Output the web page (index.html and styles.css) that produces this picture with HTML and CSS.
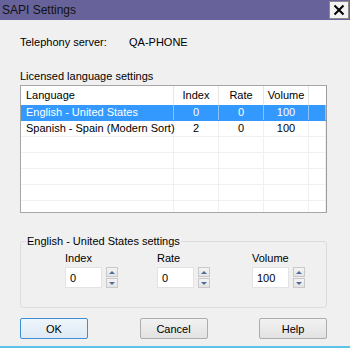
FILE: index.html
```html
<!DOCTYPE html>
<html lang="en">

<head>
    <meta charset="UTF-8">
    <meta name="viewport" content="width=device-width, initial-scale=1.0">
    <title>SAPI Settings</title>
    <link rel="stylesheet" href="styles.css">
</head>

<body>
    <div class="window">
        <div class="titlebar">
            <span class="title">SAPI Settings</span>
            <button class="close" title="Close">
                <svg width="12" height="12" viewBox="0 0 12 12">
                    <path d="M1.5 1.5 L10.5 10.5 M10.5 1.5 L1.5 10.5" stroke="#000" stroke-width="2" />
                </svg>
            </button>
        </div>

        <div class="content">
            <div class="server">
                <span class="server-label">Telephony server:</span>
                <span>QA-PHONE</span>
            </div>

            <div class="list-label">Licensed language settings</div>

            <div class="list">
                <div class="row header">
                    <div class="cell lang">Language</div>
                    <div class="cell">Index</div>
                    <div class="cell">Rate</div>
                    <div class="cell">Volume</div>
                    <div class="cell"></div>
                </div>
                <div class="row selected">
                    <div class="cell lang">English - United States</div>
                    <div class="cell">0</div>
                    <div class="cell">0</div>
                    <div class="cell">100</div>
                    <div class="cell"></div>
                </div>
                <div class="row">
                    <div class="cell lang">Spanish - Spain (Modern Sort)</div>
                    <div class="cell">2</div>
                    <div class="cell">0</div>
                    <div class="cell">100</div>
                    <div class="cell"></div>
                </div>
                <div class="row"><div class="cell lang"></div><div class="cell"></div><div class="cell"></div><div class="cell"></div><div class="cell"></div></div>
                <div class="row"><div class="cell lang"></div><div class="cell"></div><div class="cell"></div><div class="cell"></div><div class="cell"></div></div>
                <div class="row"><div class="cell lang"></div><div class="cell"></div><div class="cell"></div><div class="cell"></div><div class="cell"></div></div>
                <div class="row"><div class="cell lang"></div><div class="cell"></div><div class="cell"></div><div class="cell"></div><div class="cell"></div></div>
                <div class="row"><div class="cell lang"></div><div class="cell"></div><div class="cell"></div><div class="cell"></div><div class="cell"></div></div>
            </div>

            <fieldset class="group">
                <legend>English - United States settings</legend>
                <div class="fields">
                    <div class="field">
                        <label>Index</label>
                        <div class="spin">
                            <input type="text" value="0">
                            <div class="arrows">
                                <span class="arrow up"></span>
                                <span class="arrow down"></span>
                            </div>
                        </div>
                    </div>
                    <div class="field">
                        <label>Rate</label>
                        <div class="spin">
                            <input type="text" value="0">
                            <div class="arrows">
                                <span class="arrow up"></span>
                                <span class="arrow down"></span>
                            </div>
                        </div>
                    </div>
                    <div class="field">
                        <label>Volume</label>
                        <div class="spin">
                            <input type="text" value="100">
                            <div class="arrows">
                                <span class="arrow up"></span>
                                <span class="arrow down"></span>
                            </div>
                        </div>
                    </div>
                </div>
            </fieldset>

            <div class="buttons">
                <button class="btn default">OK</button>
                <button class="btn">Cancel</button>
                <button class="btn">Help</button>
            </div>
        </div>
    </div>
</body>

</html>
```

FILE: styles.css
```css
body {
    margin: 0;
    font-family: "Liberation Sans", Arial, sans-serif;
    font-size: 11px;
    color: #000;
}

.window {
    width: 350px;
    height: 348px;
    box-sizing: border-box;
    background-color: #f0f0f0;
    border-bottom: 2px solid #5cc3e8;
}

.titlebar {
    height: 20px;
    background-color: #67639a;
    display: flex;
    align-items: center;
    justify-content: space-between;
    padding-left: 2px;
}

.title {
    font-size: 12px;
    color: #111;
}

.close {
    width: 20px;
    height: 18px;
    margin-right: 1px;
    padding: 0;
    border: 1px solid #8a8a8a;
    background-color: #f2f2f2;
    display: flex;
    align-items: center;
    justify-content: center;
}

.content {
    padding: 0 23px 0 20px;
}

.server {
    margin-top: 15px;
    line-height: 14px;
    display: flex;
}

.server-label {
    width: 109px;
}

.list-label {
    margin-top: 20px;
    line-height: 14px;
}

.list {
    margin-top: 2px;
    height: 128px;
    box-sizing: border-box;
    border: 1px solid #a6a6a6;
    border-right-color: #9c9c9c;
    background-color: #fff;
    overflow: hidden;
}

.row {
    display: grid;
    grid-template-columns: 153px 45px 45px 45px 17px;
    height: 16px;
    box-sizing: border-box;
    border-bottom: 1px solid #f0f0f0;
}

.row.header {
    height: 19px;
    border-bottom: none;
    align-items: center;
}

.cell {
    border-right: 1px solid #f0f0f0;
    text-align: center;
    line-height: 15px;
    white-space: nowrap;
}

.header .cell {
    line-height: 19px;
    border-right-color: #e5e5e5;
}

.cell.lang {
    text-align: left;
    padding-left: 5px;
}

.row.selected {
    background-color: #3399ff;
    color: #fff;
    border-bottom-color: #3399ff;
}

.selected .cell {
    border-right-color: #8cc3f7;
}

.group {
    min-width: 0;
    margin: 21px 0 0 0;
    padding: 3px 0 19px 0;
    border: 1px solid #dcdcdc;
    border-radius: 3px;
}

.group legend {
    margin-left: 5px;
    padding: 0 1px;
    line-height: 14px;
}

.fields {
    display: flex;
    padding-left: 44px;
}

.field {
    display: flex;
    flex-direction: column;
    width: 92px;
}

.field + .field {
    width: 95px;
}

.field + .field + .field {
    width: auto;
}

.field label {
    line-height: 14px;
    margin-bottom: 2px;
}

.spin {
    display: flex;
    align-items: center;
}

.spin input {
    width: 37px;
    height: 21px;
    box-sizing: border-box;
    border: 1px solid #e3e3e3;
    background-color: #fff;
    font-family: inherit;
    font-size: 11px;
    padding: 0 4px;
    margin: 0;
}

.arrows {
    margin-left: 4px;
    display: flex;
    flex-direction: column;
    gap: 1px;
}

.arrow {
    width: 12px;
    height: 10px;
    box-sizing: border-box;
    border: 1px solid #c9c9c9;
    background: linear-gradient(#f4f4f4, #e4e4e4);
    display: flex;
    align-items: center;
    justify-content: center;
}

.arrow::after {
    content: "";
    border-left: 3px solid transparent;
    border-right: 3px solid transparent;
}

.arrow.up::after {
    border-bottom: 3px solid #4d6e9c;
}

.arrow.down::after {
    border-top: 3px solid #4d6e9c;
}

.buttons {
    margin-top: 10px;
    display: flex;
    justify-content: space-between;
}

.btn {
    width: 68px;
    height: 21px;
    font-family: inherit;
    font-size: 11px;
    color: #000;
    border: 1px solid #adadad;
    border-radius: 2px;
    background: linear-gradient(#f2f2f2, #e2e2e2);
    padding: 0;
}

.btn.default {
    border-color: #3d8ed3;
    background: linear-gradient(#eef5fb, #dfeaf5);
}
```
